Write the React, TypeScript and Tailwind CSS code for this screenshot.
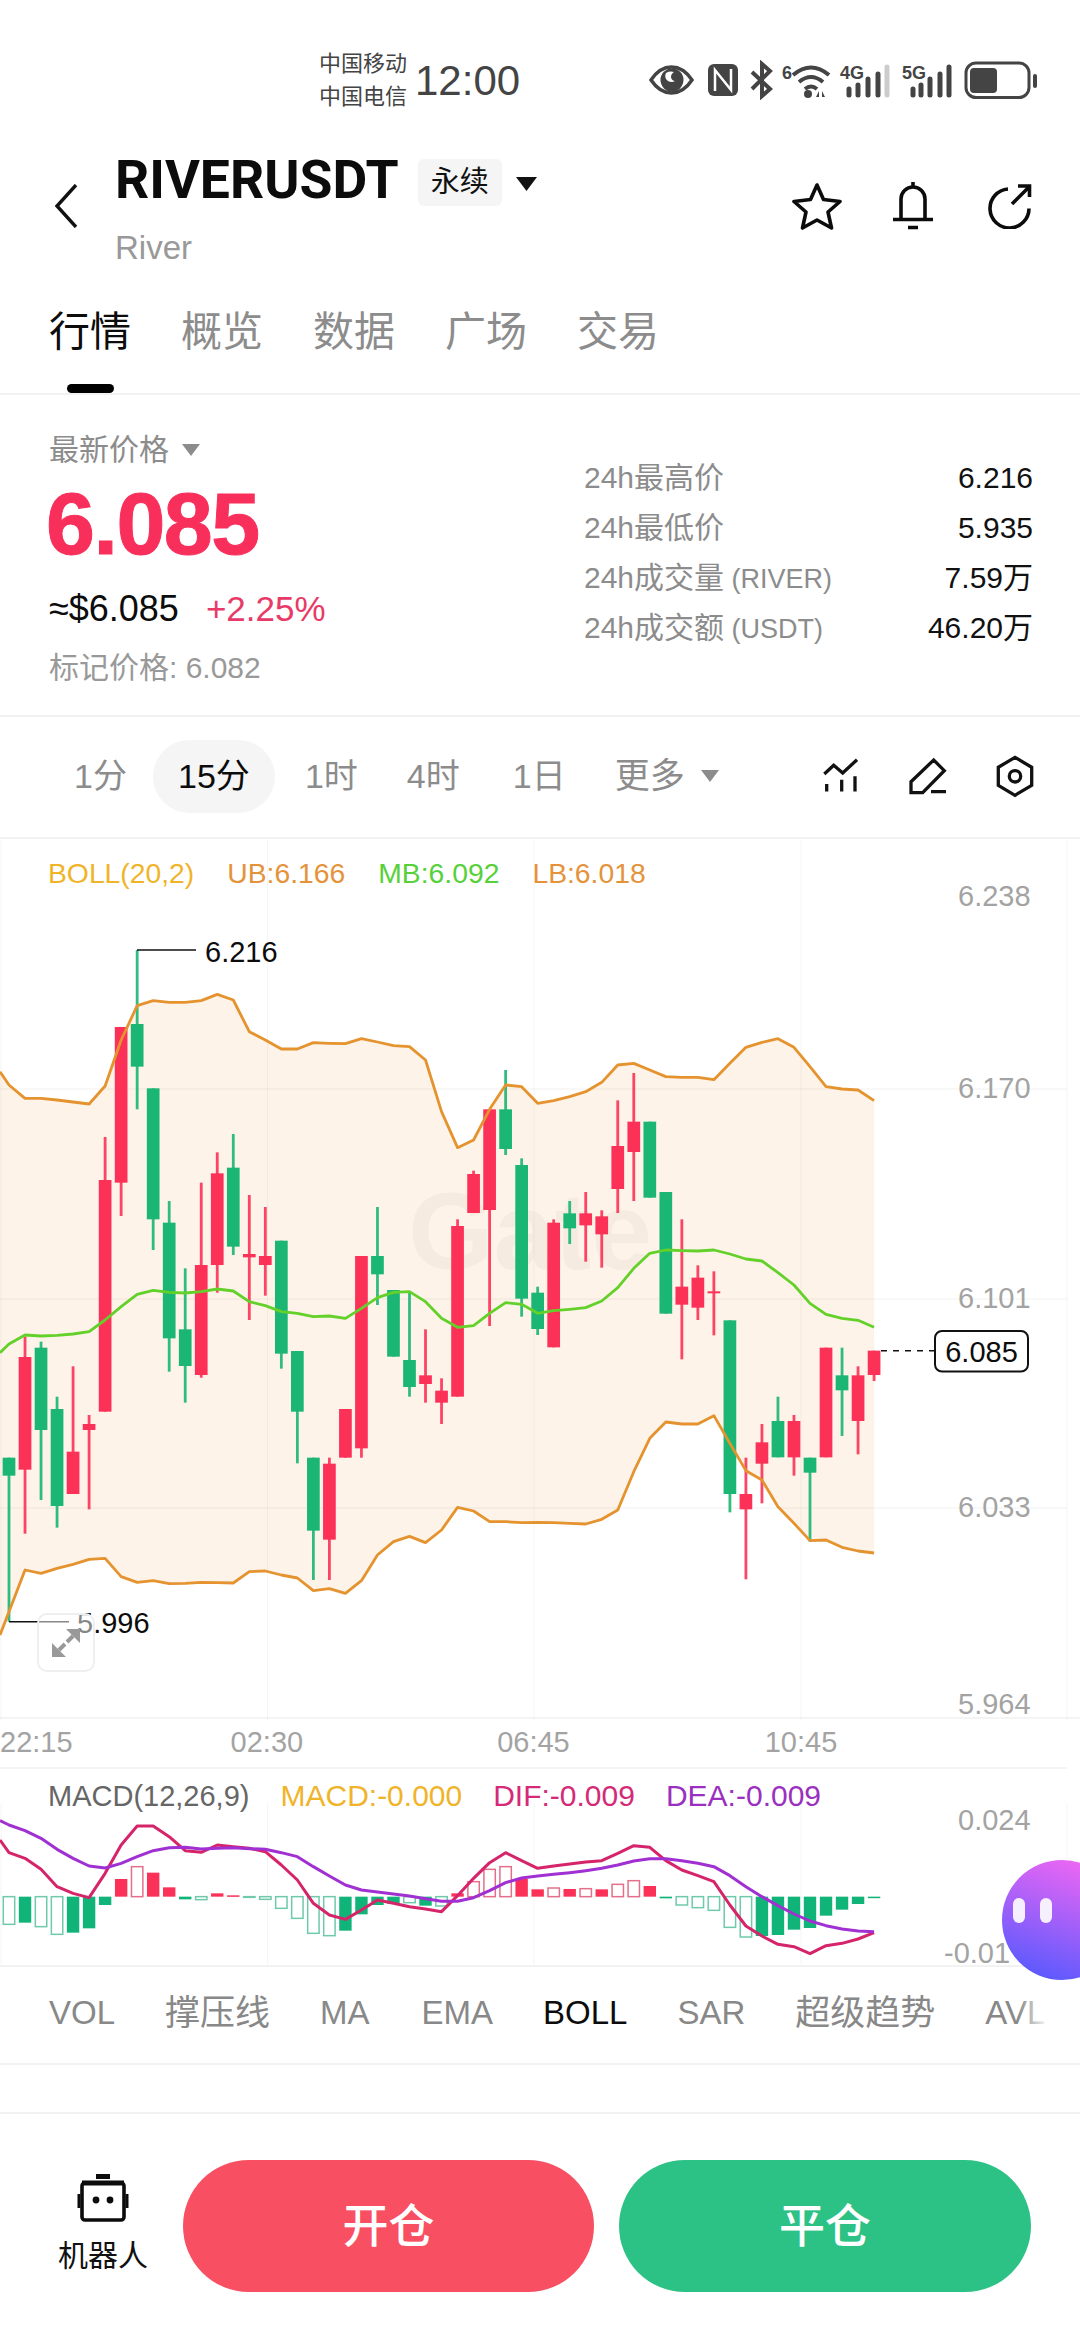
import React from 'react';

// y values below are read from the 3x crops: Z = 0 is page y 850
const chartY = (z: number) => 11 + z / 3;
const macdY = (z: number) => z / 3 - 39;
const barX = (i: number) => 9 + 16.02 * i;

const RED = '#fc3157';
const GREEN = '#1bb673';

// up, wick top, body top, body bottom, wick bottom
type Candle = [number, number, number, number, number];
const candles: Candle[] = [
  [0, 1823, 1823, 1877, 2315], [1, 1460, 1521, 1859, 2051], [0, 1475, 1493, 1740, 1950], [0, 1640, 1677, 1968, 2033],
  [1, 1549, 1805, 1932, 1932], [1, 1695, 1722, 1740, 1978], [1, 861, 990, 1685, 1685], [1, 531, 531, 998, 1098],
  [0, 300, 522, 650, 778], [0, 715, 715, 1108, 1200], [0, 1053, 1118, 1465, 1565], [0, 1255, 1438, 1548, 1658],
  [1, 998, 1245, 1575, 1583], [1, 907, 970, 1245, 1328], [0, 852, 953, 1190, 1215], [1, 1035, 1212, 1222, 1410],
  [1, 1071, 1218, 1245, 1337], [0, 1172, 1172, 1511, 1556], [0, 1503, 1503, 1685, 1840], [0, 1823, 1823, 2042, 2190],
  [1, 1823, 1841, 2069, 2190], [1, 1677, 1677, 1823, 1823], [1, 1218, 1218, 1795, 1823], [0, 1071, 1218, 1273, 1365],
  [0, 1320, 1320, 1520, 1520], [0, 1328, 1530, 1611, 1640], [1, 1438, 1576, 1602, 1658], [1, 1585, 1622, 1658, 1722],
  [1, 1108, 1128, 1640, 1640], [1, 962, 972, 1089, 1089], [1, 778, 778, 1080, 1428], [0, 660, 778, 897, 915],
  [0, 925, 945, 1346, 1400], [0, 1310, 1328, 1437, 1455], [1, 1108, 1118, 1492, 1492], [0, 1053, 1090, 1135, 1182],
  [1, 1026, 1090, 1126, 1235], [1, 1081, 1099, 1153, 1253], [1, 751, 888, 1017, 1089], [1, 669, 815, 906, 1053],
  [0, 815, 815, 1043, 1043], [0, 1026, 1026, 1391, 1391], [1, 1108, 1310, 1364, 1528], [1, 1246, 1283, 1373, 1410],
  [1, 1264, 1324, 1330, 1456], [0, 1411, 1411, 1932, 1987], [1, 1823, 1932, 1978, 2188], [1, 1722, 1777, 1841, 1960],
  [0, 1640, 1713, 1822, 1822], [1, 1695, 1713, 1822, 1877], [0, 1823, 1823, 1868, 2075], [1, 1493, 1493, 1822, 1822],
  [0, 1493, 1576, 1621, 1758], [1, 1549, 1576, 1713, 1813], [1, 1502, 1502, 1575, 1593],
];

const upper = [705, 745, 745, 750, 756, 762, 708, 570, 467, 452, 457, 457, 452, 433, 450, 545, 570, 597, 597, 578, 580, 581, 566, 576, 587, 590, 630, 785, 893, 870, 778, 705, 710, 760, 752, 740, 725, 697, 645, 640, 660, 680, 682, 682, 689, 640, 592, 577, 566, 592, 650, 710, 717, 720, 752];
const middle = [282, 255, 258, 256, 252, 245, 210, 170, 133, 121, 127, 129, 125, 117, 123, 155, 167, 185, 190, 200, 198, 205, 175, 143, 127, 125, 155, 205, 232, 227, 190, 158, 163, 190, 182, 178, 173, 153, 113, 55, 10, 0, 2, 3, 0, 12, 27, 33, 68, 105, 160, 193, 205, 211, 232].map((v) => v + 1200);
const lower = [1085, 960, 970, 955, 943, 928, 925, 980, 997, 992, 1001, 1000, 997, 998, 999, 965, 963, 975, 984, 1022, 1016, 1030, 992, 915, 875, 859, 878, 840, 772, 783, 815, 815, 818, 817, 818, 820, 822, 808, 780, 665, 565, 516, 522, 522, 497, 580, 662, 690, 770, 820, 872, 870, 892, 903, 909].map((v) => v + 1200);

// filled, up, end of the bar (the zero line is z = 500)
type Bar = [number, number, number];
const bars: Bar[] = [
  [0, 0, 583], [1, 0, 578], [0, 0, 590], [0, 0, 613], [1, 0, 608], [1, 0, 595], [1, 0, 525], [1, 1, 447], [0, 1, 410], [1, 1, 428],
  [1, 1, 472], [1, 0, 508], [0, 0, 509], [1, 1, 490], [1, 1, 496], [0, 0, 502], [0, 0, 508], [0, 0, 535], [0, 0, 565], [0, 0, 610],
  [0, 0, 617], [1, 0, 602], [1, 0, 553], [1, 0, 525], [1, 0, 522], [0, 0, 518], [1, 0, 527], [0, 0, 528], [1, 1, 490], [0, 1, 455],
  [0, 1, 418], [0, 1, 410], [1, 1, 447], [1, 1, 478], [0, 1, 474], [1, 1, 477], [0, 1, 476], [1, 1, 478], [0, 1, 463], [0, 1, 452],
  [1, 1, 468], [1, 0, 505], [0, 0, 525], [0, 0, 533], [0, 0, 541], [0, 0, 592], [0, 0, 621], [1, 0, 618], [1, 0, 615], [1, 0, 599],
  [1, 0, 594], [1, 0, 557], [1, 0, 539], [1, 0, 522], [1, 0, 503],
];

const dif = [368, 385, 418, 470, 490, 503, 430, 345, 288, 288, 320, 362, 367, 345, 350, 355, 365, 405, 450, 520, 555, 568, 540, 510, 520, 530, 537, 545, 497, 445, 398, 368, 392, 415, 408, 402, 396, 392, 370, 347, 352, 392, 420, 437, 455, 525, 588, 618, 643, 650, 671, 647, 640, 627, 608];
const dea = [285, 302, 325, 358, 385, 408, 414, 400, 380, 362, 353, 352, 357, 355, 353, 356, 358, 368, 380, 410, 438, 465, 480, 486, 492, 498, 506, 514, 514, 503, 482, 458, 444, 438, 433, 428, 422, 415, 405, 393, 386, 386, 392, 400, 410, 437, 470, 500, 527, 552, 573, 587, 597, 603, 605];

const line = (values: number[], toY: (z: number) => number, startZ: number) =>
  `0,${toY(startZ)} ` + values.map((v, i) => `${barX(i)},${toY(v)}`).join(' ');

function StatusIcons() {
  return (
    <svg width="400" height="40" viewBox="0 0 400 40" className="block" fill="none" stroke="#444" strokeWidth="3">
      {/* eye */}
      <path d="M10 20C16 11 23 7 30.500 7s14.500 4 20.500 13c-6 9-13 13-20.500 13S16 29 10 20Z" strokeWidth="3.500" />
      <circle cx="31" cy="20" r="11.500" fill="#444" stroke="none" />
      <path d="M25 13a10 10 0 0 1 8-1c-2 1-3 3-3 5s2 4 4 4c-3 2-7 1-9-2-1-2-1-4 0-6Z" fill="#fff" stroke="none" />
      {/* nfc */}
      <rect x="67" y="4" width="30" height="32" rx="6" fill="#444" stroke="none" />
      <path d="M74 31V10l16 20V9" stroke="#fff" strokeWidth="2.500" />
      {/* bluetooth */}
      <path d="M111 12l18 17-8 7V4l8 7-18 18" strokeWidth="4" />
      {/* wifi */}
      <text x="141" y="19" fill="#444" stroke="none" className="text-[18px] font-bold">6</text>
      <path d="M152 15Q170 0 188 15M158 22Q170 12 182 22M164 29Q170 24 176 29" strokeWidth="4" />
      <circle cx="167" cy="34" r="4" fill="#444" stroke="none" />
      <path d="M175 37l3-6v6ZM181 31l3 6h-3Z" fill="#444" stroke="none" />
      {/* 4G */}
      <text x="199" y="19" fill="#444" stroke="none" className="text-[18px] font-bold">4G</text>
      <path d="M208 35v-6M217 35v-10M227 35v-16M237 35V14" strokeWidth="5" strokeLinecap="round" />
      <path d="M246 35V7" stroke="#ccc" strokeWidth="5" strokeLinecap="round" />
      {/* 5G */}
      <text x="261" y="19" fill="#444" stroke="none" className="text-[18px] font-bold">5G</text>
      <path d="M272 35v-6M280 35v-10M289 35v-16M299 35V14M308 35V7" strokeWidth="5" strokeLinecap="round" />
      {/* battery */}
      <rect x="325" y="3" width="63" height="34.500" rx="10" />
      <rect x="329" y="8" width="27" height="25" rx="4" fill="#444" stroke="none" />
      <path d="M394 16v10" strokeWidth="4" strokeLinecap="round" />
    </svg>
  );
}

function Triangle({ color, w, h }: { color: string; w: number; h: number }) {
  return (
    <svg width={w} height={h} viewBox="0 0 20 14" preserveAspectRatio="none" className="block">
      <path d="M0 0h20L10 14Z" fill={color} />
    </svg>
  );
}

function Header() {
  return (
    <div className="flex h-[152px] pl-[54px] pr-[47px] items-center">
      <svg width="24" height="44" viewBox="0 0 24 44" fill="none" stroke="#111" strokeWidth="3.400" className="shrink-0">
        <path d="M22 1L3 22l19 21" />
      </svg>
      <div className="ml-[37px] self-start pt-[20px]">
        <div className="flex items-center h-[60px]">
          <span className="[font-family:Roboto,sans-serif] font-bold text-[53.500px] leading-[60px] text-[#0c0c0c]">RIVERUSDT</span>
          <span className="ml-[19px] mt-[5px] w-[84px] h-[47px] flex items-center justify-center bg-[#f5f5f5] rounded-[6px] text-[29px] text-[#111]">永续</span>
          <span className="ml-[14px] mt-[8px]"><Triangle color="#111" w={21} h={14} /></span>
        </div>
        <div className="mt-[16px] text-[33px] leading-[44px] text-[#999]">River</div>
      </div>
      <div className="ml-auto flex items-center">
        <svg width="52" height="48" viewBox="0 0 52 48" fill="none" stroke="#0c0c0c" strokeWidth="3.600" strokeLinejoin="round">
          <path d="M26 3l6.500 14.500L49 19.500 37 30l3.500 16L26 38l-14.500 8L15 30 3 19.500l16.500-2Z" />
        </svg>
        <svg width="44" height="50" viewBox="0 0 44 50" fill="none" stroke="#0c0c0c" strokeWidth="3.600" className="ml-[48px]">
          <path d="M10 38V18a12 12 0 0 1 24 0v20M2 38.500h40M22 1v5M17 46.500h10" />
        </svg>
        <svg width="46" height="46" viewBox="0 0 46 46" fill="none" stroke="#0c0c0c" strokeWidth="3.600" className="ml-[52px]">
          <path d="M21 6a19.500 19.500 0 1 0 21 19.500M25 21L42 4M31 3h11.500v11" />
        </svg>
      </div>
    </div>
  );
}

function Tabs() {
  return (
    <div className="h-[113px] border-b-2 border-[#f2f2f2] pt-[28px] pl-[49px]">
      <div className="flex gap-[50px] text-[41px] leading-[44px] text-[#8c8c8c]">
        <span className="text-[#0c0c0c]">行情</span>
        <span>概览</span>
        <span>数据</span>
        <span>广场</span>
        <span>交易</span>
      </div>
      <div className="ml-[18px] mt-[30px] w-[47px] h-[9px] rounded-full bg-black" />
    </div>
  );
}

const stats = [
  ['24h最高价', '', '6.216'],
  ['24h最低价', '', '5.935'],
  ['24h成交量', ' (RIVER)', '7.59万'],
  ['24h成交额', ' (USDT)', '46.20万'],
];

function PriceInfo() {
  return (
    <div className="flex h-[322px] border-b-2 border-[#f2f2f2]">
      <div className="w-[584px] pl-[49px] pt-[35px]">
        <div className="flex items-center text-[30px] leading-[40px] text-[#8c8c8c]">
          最新价格
          <span className="ml-[13px]"><Triangle color="#8c8c8c" w={18} h={12} /></span>
        </div>
        <div className="mt-[9px] ml-[-3px] font-bold text-[88px] leading-[90px] tracking-[-1.500px] text-[#f92f5b] [-webkit-text-stroke:1px_#f92f5b]">6.085</div>
        <div className="mt-[18px] flex leading-[44px]">
          <span className="text-[36px] text-[#0c0c0c]">≈$6.085</span>
          <span className="ml-[27px] text-[35px] text-[#e83a68]">+2.25%</span>
        </div>
        <div className="mt-[17px] text-[30px] leading-[40px] text-[#999]">标记价格: 6.082</div>
      </div>
      <div className="flex-1 pr-[47px] pt-[58px]">
        {stats.map(([label, unit, value]) => (
          <div key={label} className="flex justify-between h-[50px] text-[30px] leading-[50px]">
            <span className="h-[50px] text-[#8c8c8c] whitespace-pre">{label}<span className="text-[27px] leading-[27px]">{unit}</span></span>
            <span className="text-[#111]">{value}</span>
          </div>
        ))}
      </div>
    </div>
  );
}

function Timeframes() {
  return (
    <div className="flex items-center h-[122px] border-b-2 border-[#f2f2f2] pl-[74px] pb-[2px] text-[34px] text-[#8c8c8c]">
      <span>1分</span>
      <span className="ml-[26px] w-[122px] h-[73px] rounded-full bg-[#f5f5f5] flex items-center justify-center text-[#0c0c0c]">15分</span>
      <span className="ml-[30px]">1时</span>
      <span className="ml-[49px]">4时</span>
      <span className="ml-[53px]">1日</span>
      <span className="ml-[49px] text-[35px]">更多</span>
      <span className="ml-[16px]"><Triangle color="#8c8c8c" w={18} h={12} /></span>
      <svg width="40" height="36" viewBox="0 0 40 36" fill="none" stroke="#111" strokeWidth="3.300" className="ml-[102px]">
        <path d="M3.300 16l9.400-8.700 9 7.700L36 1.700M5.700 26v7.500M20.700 21.700v11.800M34 18.300v15.200" />
      </svg>
      <svg width="42" height="42" viewBox="0 0 42 42" fill="none" stroke="#111" strokeWidth="3.300" className="ml-[45px]">
        <path d="M5 37.700v-11L27.700 5l10.600 10.700-21.600 22ZM25 36.700h15" />
      </svg>
      <svg width="48" height="47" viewBox="0 0 48 47" fill="none" stroke="#111" strokeWidth="3.300" className="ml-[43px]">
        <path d="M24 4.300l16.700 10v18l-16.700 10-16.700-10v-18Z" />
        <circle cx="24" cy="23.300" r="5.700" />
      </svg>
    </div>
  );
}

function CandleChart() {
  return (
    <div className="relative h-[880px] border-b-2 border-[#f4f4f4]">
      <svg viewBox="0 0 1080 880" className="block w-[1080px] h-[880px]">
        <polygon
          fill="#fdf3e8"
          points={`${line(upper, chartY, 665)} ${lower.map((v, i) => `${barX(i)},${chartY(v)}`).reverse().join(' ')} 0,${chartY(1155 + 1200)}`}
        />
        {[1, 267.5, 534, 801, 1067].map((x) => (
          <line key={x} x1={x} x2={x} y1="0" y2="880" stroke="#000" strokeOpacity="0.04" />
        ))}
        {[250, 460, 669].map((y) => (
          <line key={y} x1="0" x2="1067" y1={y} y2={y} stroke="#000" strokeOpacity="0.04" strokeWidth="1.500" />
        ))}
        <text x="408" y="430" className="text-[110px] font-bold" fill="#000" fillOpacity="0.03">Gate</text>

        {candles.map(([up, wickTop, top, bottom, wickBottom], i) => (
          <g key={i} fill={up ? RED : GREEN}>
            <rect x={barX(i) - 1.4} width="2.800" y={chartY(wickTop)} height={(wickBottom - wickTop) / 3} opacity="0.9" />
            <rect x={barX(i) - 6.35} width="12.700" y={chartY(top)} height={Math.max((bottom - top) / 3, 2)} />
          </g>
        ))}

        <g fill="none" strokeWidth="2.800" strokeLinejoin="round">
          <polyline points={line(upper, chartY, 665)} stroke="#e5932f" />
          <polyline points={line(lower, chartY, 1155 + 1200)} stroke="#e5932f" />
          <polyline points={line(middle, chartY, 308 + 1200)} stroke="#63d12a" />
        </g>

        {/* high and low markers */}
        <path d={`M137 ${chartY(300)}H196`} stroke="#111" strokeWidth="1.500" />
        <text x="205" y={chartY(305)} dominantBaseline="central" className="text-[29px]" fill="#0c0c0c">6.216</text>
        <path d={`M9 ${chartY(2315)}H69`} stroke="#111" strokeWidth="1.500" />
        <text x="77" y={chartY(2320)} dominantBaseline="central" className="text-[29px]" fill="#0c0c0c">5.996</text>

        {[['6.238', 137], ['6.170', 715], ['6.101', 1343], ['6.033', 1970], ['5.964', 2562]].map(([label, z]) => (
          <text key={label} x="958" y={chartY(z as number)} dominantBaseline="central" className="text-[29px]" fill="#a3a3a3">{label}</text>
        ))}

        {/* last price */}
        <path d={`M881 ${chartY(1502)}H934`} stroke="#111" strokeWidth="1.500" strokeDasharray="6 6" />
        <rect x="935" y={chartY(1443)} width="93" height="40.500" rx="7" fill="#fff" stroke="#111" strokeWidth="2" />
        <text x="981.500" y={chartY(1505)} textAnchor="middle" dominantBaseline="central" className="text-[29px]" fill="#0c0c0c">6.085</text>
      </svg>

      <div className="absolute left-[48px] top-[14px] flex gap-[33px] text-[28.300px] leading-[40px] whitespace-nowrap">
        <span className="text-[#f0b42a]">BOLL(20,2)</span>
        <span className="text-[#e5933a]">UB:6.166</span>
        <span className="text-[#57d13a]">MB:6.092</span>
        <span className="text-[#e5933a]">LB:6.018</span>
      </div>

      <div className="absolute left-[37px] top-[774px] w-[58px] h-[59px] rounded-[10px] border-2 border-[#efefef] bg-white/50 flex items-center justify-center">
        <svg width="30" height="30" viewBox="0 0 30 30" fill="#999" stroke="#999">
          <path d="M29 1H15L29 15ZM1 29H15L1 15Z" strokeWidth="0" />
          <path d="M22 8l-6 6M8 22l6-6" strokeWidth="4" />
        </svg>
      </div>
    </div>
  );
}

function TimeAxis() {
  return (
    <div className="flex items-center w-[1067px] h-[50px] border-b-2 border-[#f4f4f4] text-[29px] text-[#a3a3a3]">
      <span>22:15</span>
      <span className="ml-[158px]">02:30</span>
      <span className="ml-[194px]">06:45</span>
      <span className="ml-[195px]">10:45</span>
    </div>
  );
}

function MacdPanel() {
  return (
    <div className="relative h-[198px] border-b-2 border-[#f2f2f2]">
      <svg viewBox="0 0 1080 198" className="absolute inset-0 w-[1080px] h-[198px]">
        {[1, 267.5, 534, 801, 1067].map((x) => (
          <line key={x} x1={x} x2={x} y1="34" y2="196" stroke="#000" strokeOpacity="0.04" />
        ))}
        {bars.map(([filled, up, end], i) => {
          const top = macdY(Math.min(end, 500));
          const height = Math.abs(end - 500) / 3;
          return filled ? (
            <rect key={i} x={barX(i) - 6.2} width="12.400" y={top} height={Math.max(height, 1.5)} fill={up ? RED : '#10b478'} />
          ) : (
            <rect key={i} x={barX(i) - 5.7} width="11.400" y={top} height={height} fill="#fff" stroke={up ? '#e2708a' : '#6fc9ab'} strokeWidth="1.500" />
          );
        })}
        <g fill="none" strokeWidth="3" strokeLinejoin="round">
          <polyline points={line(dif, macdY, 330)} stroke="#d6246a" />
          <polyline points={line(dea, macdY, 272)} stroke="#a030d2" />
        </g>
        <text x="958" y={macdY(270)} dominantBaseline="central" className="text-[29px]" fill="#a3a3a3">0.024</text>
        <text x="944" y={macdY(670)} dominantBaseline="central" className="text-[29px]" fill="#a3a3a3">-0.01</text>
      </svg>
      <div className="relative flex gap-[31px] pl-[48px] pt-[7px] text-[30px] leading-[40px] whitespace-nowrap">
        <span className="text-[29px] text-[#666]">MACD(12,26,9)</span>
        <span className="text-[#f0b42a]">MACD:-0.000</span>
        <span className="text-[#d42a78]">DIF:-0.009</span>
        <span className="text-[#9b30c0]">DEA:-0.009</span>
      </div>
    </div>
  );
}

function Indicators() {
  return (
    <div className="relative h-[98px] border-b-2 border-[#f2f2f2] overflow-hidden">
      <div className="flex items-center h-[92px] pl-[49px] gap-[50px] text-[33px] text-[#888] whitespace-nowrap">
        <span>VOL</span>
        <span className="text-[35px]">撑压线</span>
        <span>MA</span>
        <span className="ml-[2px]">EMA</span>
        <span className="text-[#0c0c0c]">BOLL</span>
        <span>SAR</span>
        <span className="text-[35px]">超级趋势</span>
        <span>AVL</span>
      </div>
      <div className="absolute right-0 top-0 h-full w-[62px] bg-linear-to-r from-transparent to-white to-[50%]" />
    </div>
  );
}

function BottomBar() {
  return (
    <div className="flex pt-[46px] pl-[58px]">
      <div className="w-[90px] mr-[35px] flex flex-col items-center pt-[14px]">
        <svg width="52" height="48" viewBox="0 0 52 48" fill="none" stroke="#0c0c0c" strokeWidth="3.600">
          <rect x="19" y="0" width="14" height="5" fill="#0c0c0c" stroke="none" />
          <rect x="5" y="9" width="42" height="37" rx="3" />
          <path d="M5 9h42" strokeWidth="5" />
          <path d="M2 20v14M50 20v14" strokeWidth="3" />
          <circle cx="19" cy="26" r="3.400" fill="#0c0c0c" stroke="none" />
          <circle cx="33" cy="26" r="3.400" fill="#0c0c0c" stroke="none" />
        </svg>
        <span className="mt-[14px] text-[30px] leading-[40px] text-[#111] whitespace-nowrap">机器人</span>
      </div>
      <button className="w-[411px] h-[132px] rounded-full bg-[#f84f63] text-white text-[46px] font-medium">开仓</button>
      <button className="ml-[25px] w-[412px] h-[132px] rounded-full bg-[#2dc285] text-white text-[46px] font-medium">平仓</button>
    </div>
  );
}

export default function App() {
  return (
    <div className="relative w-[1080px] h-[2340px] overflow-hidden bg-white [font-family:'Liberation_Sans','Noto_Sans_CJK_SC',sans-serif]">
      <div className="flex items-center h-[130px] pl-[319px] pt-[30px] text-[#444]">
        <div className="text-[22px] leading-[33px]">
          <div>中国移动</div>
          <div>中国电信</div>
        </div>
        <span className="ml-[8px] text-[42px]">12:00</span>
        <span className="ml-[121px]"><StatusIcons /></span>
      </div>
      <Header />
      <Tabs />
      <PriceInfo />
      <Timeframes />
      <CandleChart />
      <TimeAxis />
      <MacdPanel />
      <Indicators />
      <div className="h-[49px] border-b-2 border-[#f2f2f2]" />
      <BottomBar />

      {/* floating assistant bubble */}
      <div className="absolute left-[1002px] top-[1860px] w-[120px] h-[120px] rounded-full bg-[linear-gradient(200deg,#ff68f2,#4a58ff)] flex gap-[15px] pl-[11px] pt-[38px]">
        <span className="w-[12px] h-[25px] rounded-full bg-white/90" />
        <span className="w-[12px] h-[25px] rounded-full bg-white/90" />
      </div>
    </div>
  );
}
